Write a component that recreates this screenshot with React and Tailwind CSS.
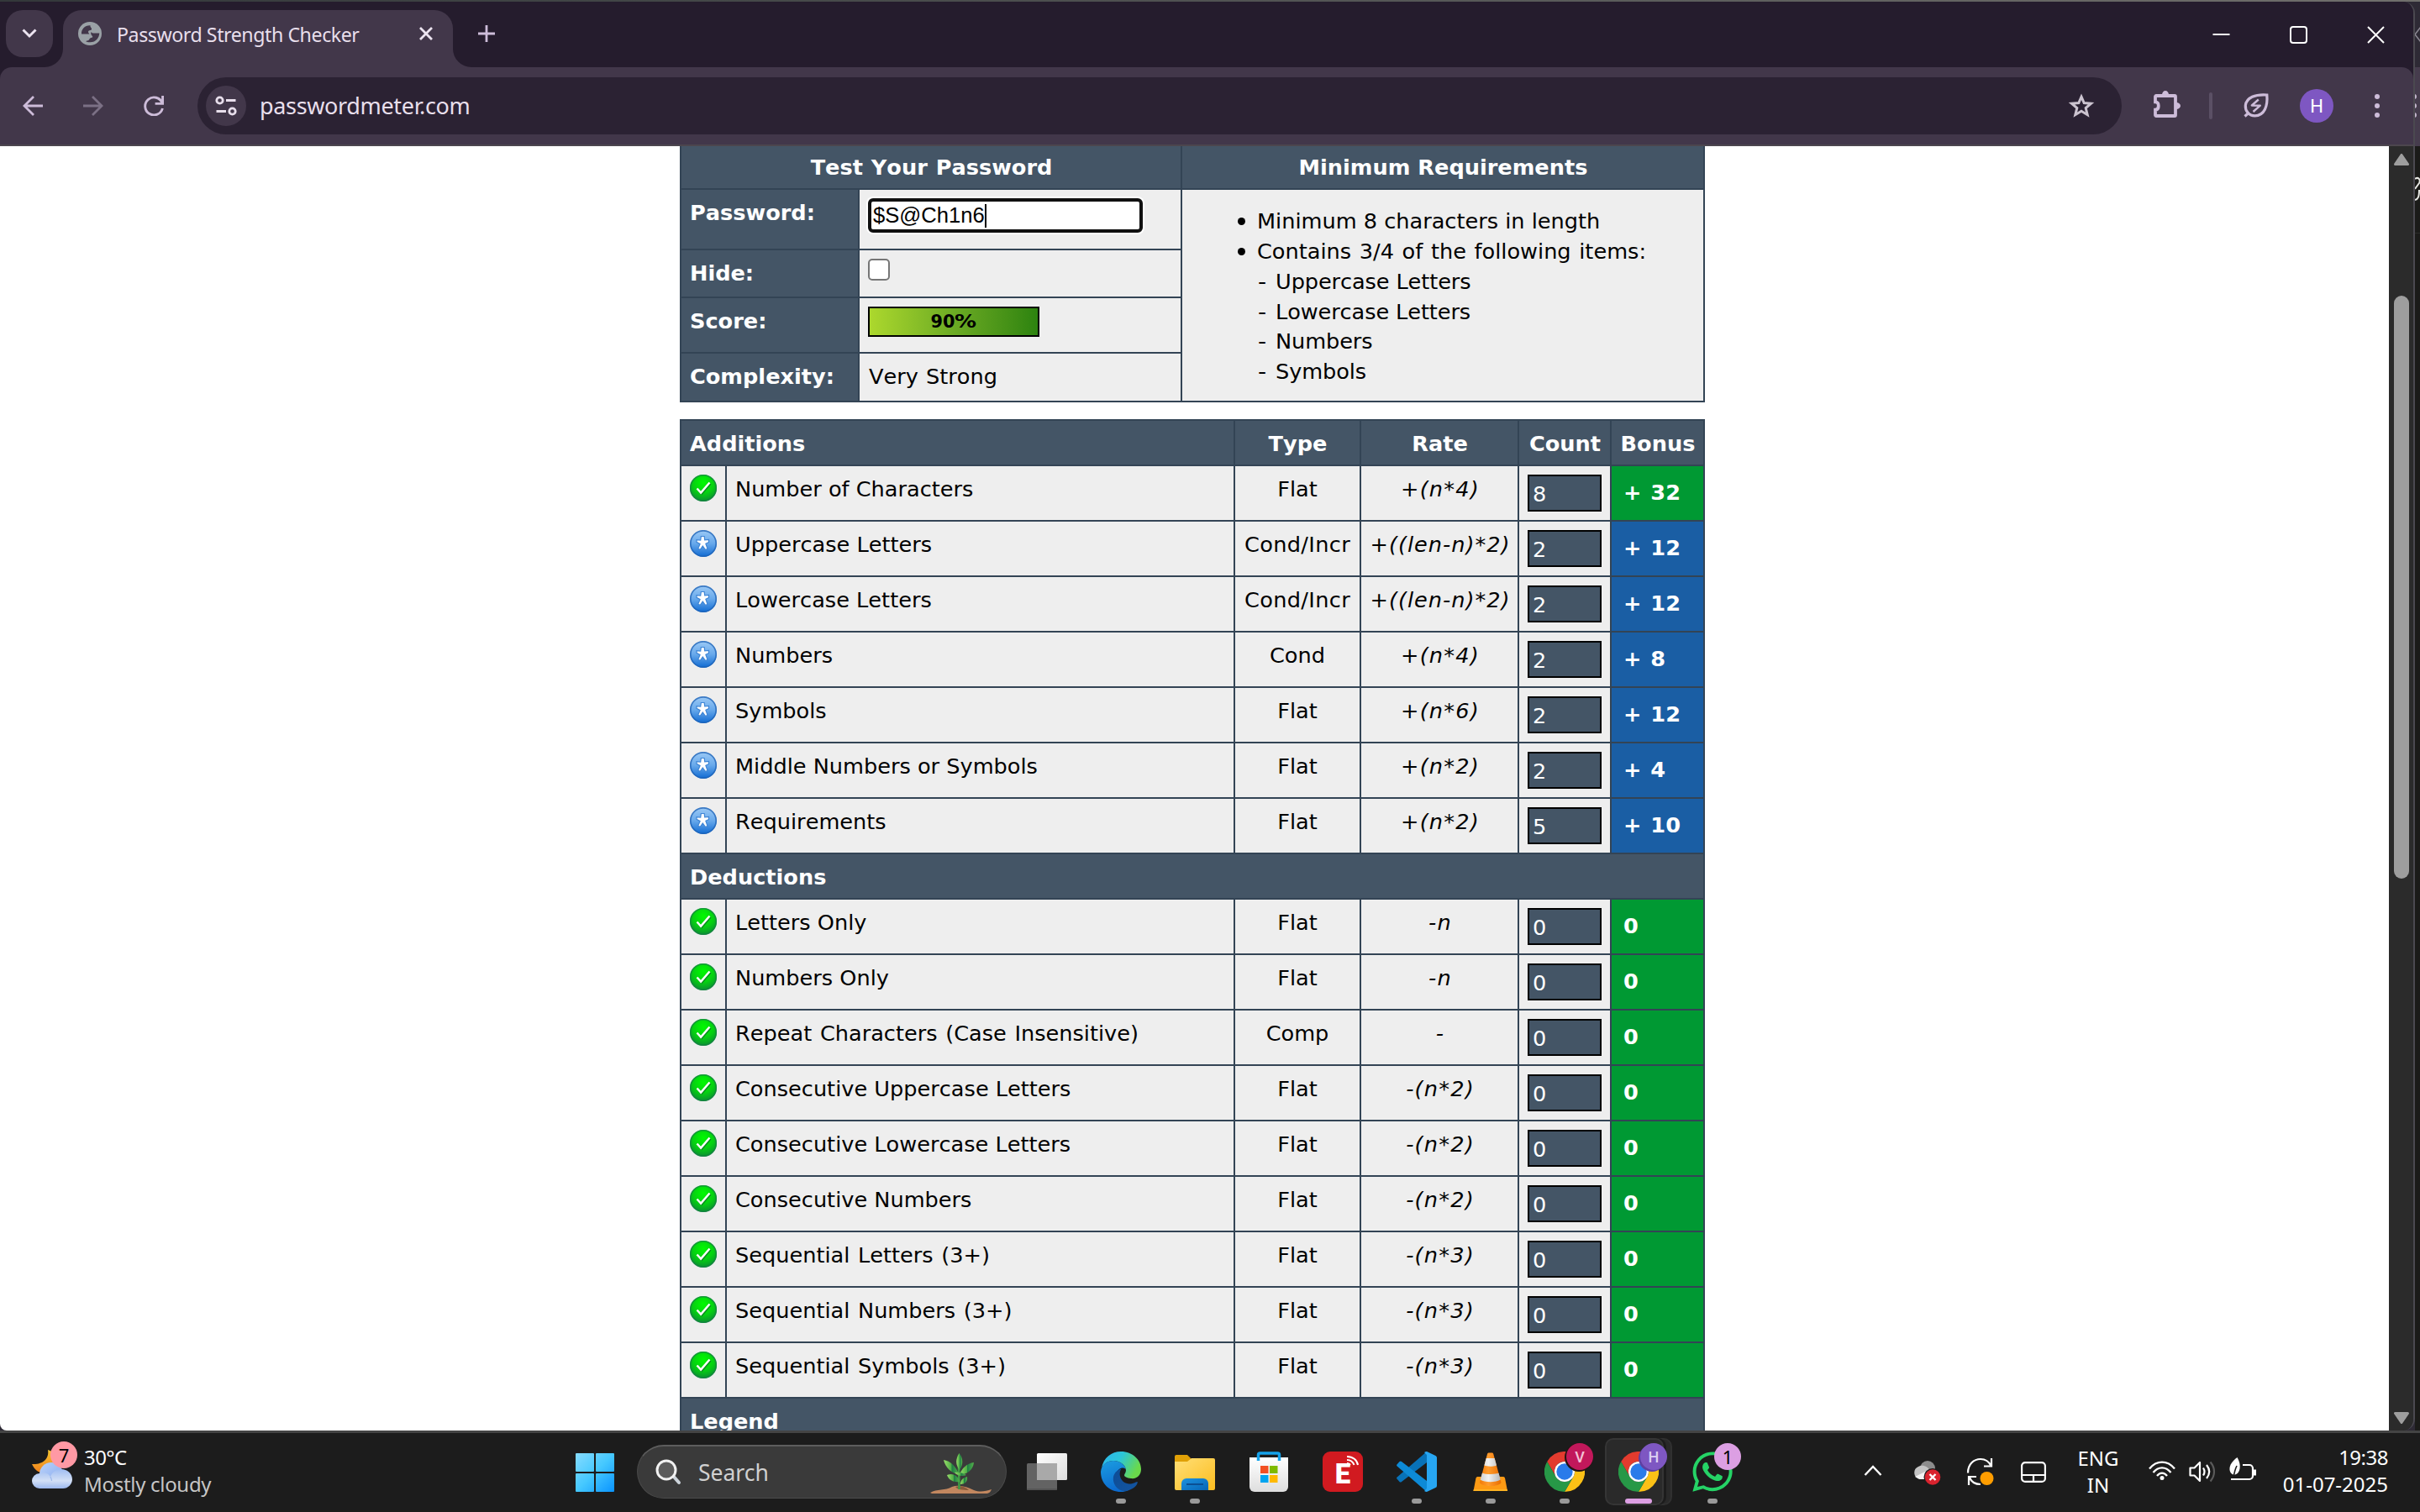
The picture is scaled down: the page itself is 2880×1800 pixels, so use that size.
import React from "react";
import { FaWhatsapp } from "react-icons/fa";

const UI = "font-['Noto_Sans','Open_Sans',sans-serif]";

/* ---------- browser chrome ---------- */

function Globe() {
  return (
    <svg viewBox="0 0 28 28" className="size-7">
      <circle cx="14" cy="14" r="14" fill="#9aa1a6" />
      <path fill="#42374a" d="M4 14.5C3.5 9 8 4 14.5 4.3C14 6.5 16.5 7 16 9C15.5 10.5 12 9.5 12 12C12 13.5 13.5 13.5 13.3 14.5z" />
      <path fill="#42374a" d="M15.5 12C17 14.5 20 13 25.3 13.5C25 19 21 24.5 14 24.3C9 24 8.5 23 10.5 22.5C15 22 11.5 19.5 17 18.5C18.5 17 14 16 15.5 12z" />
    </svg>
  );
}

function TabBar() {
  return (
    <div className="flex h-[78px] items-start bg-[#251c2d]">
      <div className="ml-[7px] mt-[10px] flex size-14 items-center justify-center rounded-[20px] bg-[#42374a]">
        <svg viewBox="0 0 18 12" className="h-3 w-[18px]" fill="none" stroke="#ece4f0" strokeWidth="3">
          <path d="M1.5 1.5L9 9l7.5-7.5" />
        </svg>
      </div>
      <div className="relative ml-3 mt-[10px] flex h-[68px] w-[464px] items-start rounded-t-[22px] bg-[#42374a] pl-[18px] pt-[14px]">
        <svg viewBox="0 0 22 22" className="absolute -left-[22px] bottom-0 size-[22px]">
          <path d="M22 0A22 22 0 0 1 0 22H22z" fill="#42374a" />
        </svg>
        <svg viewBox="0 0 22 22" className="absolute -right-[22px] bottom-0 size-[22px]">
          <path d="M0 0A22 22 0 0 0 22 22H0z" fill="#42374a" />
        </svg>
        <Globe />
        <span className="-mt-[1px] ml-[18px] w-[360px] whitespace-nowrap text-[23.2px] leading-[32px] tracking-[-0.45px] text-[#e8dfec]">
          Password Strength Checker
        </span>
        <svg viewBox="0 0 16 16" className="mt-[6px] size-4" fill="none" stroke="#ece4f0" strokeWidth="2.8">
          <path d="M1 1l14 14M15 1L1 15" />
        </svg>
      </div>
      <svg viewBox="0 0 20 20" className="ml-[30px] mt-[28px] size-5" fill="none" stroke="#cdbcd9" strokeWidth="2.8">
        <path d="M10 0v20M0 10h20" />
      </svg>
      <div className="ml-auto mr-[34px] mt-[29px] flex gap-[71px]">
        <svg viewBox="0 0 21 21" className="size-[21px]" stroke="#fff" strokeWidth="2"><path d="M.5 10h20" /></svg>
        <svg viewBox="0 0 21 21" className="size-[21px]" fill="none" stroke="#fff" strokeWidth="2">
          <rect x="1" y="1" width="19" height="19" rx="3" />
        </svg>
        <svg viewBox="0 0 21 21" className="size-[21px]" stroke="#fff" strokeWidth="2"><path d="M1 1l19 19M20 1L1 20" /></svg>
      </div>
    </div>
  );
}

function Toolbar() {
  return (
    <div className="bg-[#251c2d]">
      <div className="flex h-[94px] items-start rounded-t-[14px] border-b-2 border-[#4c464e] bg-[#42374a]">
        <svg viewBox="0 0 24 24" className="ml-[27px] mt-[34px] size-6" fill="none" stroke="#cdbcd9" strokeWidth="2.8">
          <path d="M24 12H2M13 1L2 12l11 11" />
        </svg>
        <svg viewBox="0 0 24 24" className="ml-[48px] mt-[34px] size-6" fill="none" stroke="#7b7085" strokeWidth="2.8">
          <path d="M0 12h22M11 1l11 11-11 11" />
        </svg>
        <svg viewBox="0 0 24 24" className="ml-[48px] mt-[34px] size-6" fill="none" stroke="#cdbcd9" strokeWidth="2.9">
          <path d="M22.6 0v9.4h-9M22 8.600A10.500 10.500 0 1 0 22.400 15" />
        </svg>
        <div className="ml-[40px] mt-3 flex h-[68px] w-[2290px] items-center rounded-full bg-[#2b2233]">
          <div className="ml-[10px] size-12 rounded-full bg-[#42374a]">
            <svg viewBox="0 0 48 48" className="size-12" fill="none" stroke="#e8dfec" strokeWidth="2.8">
              <circle cx="16.500" cy="17.500" r="3.700" />
              <circle cx="31.500" cy="30.500" r="3.700" />
              <path d="M24 17.500h11.500M12.500 30.500H24" />
            </svg>
          </div>
          <span className="ml-[16px] text-[27px] leading-[36px] tracking-[-0.35px] text-[#e8dfec]">passwordmeter.com</span>
          <svg viewBox="0 0 32 32" className="ml-auto mr-[32px] size-8" fill="none" stroke="#cbc3cf" strokeWidth="3">
            <path d="M16 5.200l3.200 7.400 8.300.6-6.300 5.300 2 8.200L16 22.300l-7.200 4.400 2-8.200-6.300-5.300 8.300-.6z" />
          </svg>
        </div>
        <svg viewBox="0 0 32 32" className="ml-[38px] mt-[28px] size-8" fill="none" stroke="#cdbcd9" strokeWidth="3.800">
          <path d="M3 6h22a1 1 0 0 1 1 1v22a1 1 0 0 1-1 1H3a1 1 0 0 1-1-1v-6.300c3 0 3.800-2 3.800-4.700S5 13.300 2 13.300V7a1 1 0 0 1 1-1z" />
          <path stroke="none" fill="#cdbcd9" d="M10 5a4 5 0 0 1 8 0zM27 14a5 4 0 0 1 0 8z" />
        </svg>
        <div className="ml-[34px] mt-[30px] h-8 w-1 rounded-full bg-[#5b5065]" />
        <svg viewBox="0 0 32 32" className="ml-[37px] mt-[30px] size-8" fill="none" stroke="#cdbcd9" strokeWidth="3.200">
          <path d="M27.800 3C14 2 3.500 6 2.300 15.500C1.800 22 6.500 27.800 13.500 27.800C25 27.500 29 16 27.800 3z" />
          <path d="M6.500 24l-5 4.500" />
          <path strokeWidth="2.400" strokeLinejoin="round" d="M17.800 8.500l-8 7 10 .2-8.300 7.300" />
        </svg>
        <div className="ml-[35px] mt-[26px] flex size-10 items-center justify-center rounded-full bg-[#7e57c2] font-['Roboto'] text-[22px] text-white">
          H
        </div>
        <div className="ml-[49px] mt-[32px] flex flex-col gap-[5px]">
          <i className="size-[6px] rounded-full bg-[#cdbcd9]" />
          <i className="size-[6px] rounded-full bg-[#cdbcd9]" />
          <i className="size-[6px] rounded-full bg-[#cdbcd9]" />
        </div>
      </div>
    </div>
  );
}

/* ---------- page ---------- */

function PassIcon() {
  return (
    <svg viewBox="0 0 32 32" className="size-8">
      <defs>
        <radialGradient id="passFill" cx="0.5" cy="0.3" r="0.72">
          <stop offset="0" stopColor="#00fa00" />
          <stop offset="0.55" stopColor="#06cf12" />
          <stop offset="1" stopColor="#0b8a35" />
        </radialGradient>
      </defs>
      <circle cx="16" cy="16" r="16" fill="url(#passFill)" />
      <circle cx="16" cy="16" r="15.300" fill="none" stroke="#157f45" strokeOpacity="0.7" strokeWidth="1.600" />
      <path d="M8.500 16.500l4.600 5L23.500 9.500" fill="none" stroke="#0a8a1e" strokeWidth="2.500" transform="translate(1 1.200)" />
      <path d="M8.500 16.500l4.600 5L23.500 9.500" fill="none" stroke="#fff" strokeWidth="2.500" />
    </svg>
  );
}

function StarIcon() {
  return (
    <svg viewBox="0 0 32 32" className="size-8">
      <defs>
        <linearGradient id="starFill" x1="0" y1="0" x2="0" y2="1">
          <stop offset="0" stopColor="#9ccaf6" />
          <stop offset="0.5" stopColor="#68a9eb" />
          <stop offset="1" stopColor="#0f6ad2" />
        </linearGradient>
      </defs>
      <circle cx="16" cy="16" r="16" fill="url(#starFill)" />
      <circle cx="16" cy="16" r="15.200" fill="none" stroke="#1f62b4" strokeOpacity="0.75" strokeWidth="1.700" />
      <path
        d="M13.300 7.500h3.900l.5 4.300 4.800-.3v3.100l-3.600 1.600 2.200 6.300-2.700.9-3.100-4.300-3 4.200-2.600-1.100 2.400-5.600-4.100-2.200v-2.700l4.700.3z"
        fill="#fff" stroke="#3f86d6" strokeWidth="1.200"
      />
    </svg>
  );
}

const additions = [
  ["pass", "Number of Characters", "Flat", "+(n*4)", "8", "+ 32"],
  ["star", "Uppercase Letters", "Cond/Incr", "+((len-n)*2)", "2", "+ 12"],
  ["star", "Lowercase Letters", "Cond/Incr", "+((len-n)*2)", "2", "+ 12"],
  ["star", "Numbers", "Cond", "+(n*4)", "2", "+ 8"],
  ["star", "Symbols", "Flat", "+(n*6)", "2", "+ 12"],
  ["star", "Middle Numbers or Symbols", "Flat", "+(n*2)", "2", "+ 4"],
  ["star", "Requirements", "Flat", "+(n*2)", "5", "+ 10"],
];

const deductions = [
  ["pass", "Letters Only", "Flat", "-n", "0", "0"],
  ["pass", "Numbers Only", "Flat", "-n", "0", "0"],
  ["pass", "Repeat Characters (Case Insensitive)", "Comp", "-", "0", "0"],
  ["pass", "Consecutive Uppercase Letters", "Flat", "-(n*2)", "0", "0"],
  ["pass", "Consecutive Lowercase Letters", "Flat", "-(n*2)", "0", "0"],
  ["pass", "Consecutive Numbers", "Flat", "-(n*2)", "0", "0"],
  ["pass", "Sequential Letters (3+)", "Flat", "-(n*3)", "0", "0"],
  ["pass", "Sequential Numbers (3+)", "Flat", "-(n*3)", "0", "0"],
  ["pass", "Sequential Symbols (3+)", "Flat", "-(n*3)", "0", "0"],
];

function Row({ data }) {
  const [status, name, type, rate, count, bonus] = data;
  return (
    <div className="grid h-16 grid-cols-[52px_603px_148px_186px_108px_109px] gap-x-[2px] leading-[32px]">
      <div className="bg-[#eee] p-[10px]">{status === "pass" ? <PassIcon /> : <StarIcon />}</div>
      <div className={"bg-[#eee] pl-[10px] pt-[11px]" + (name.includes("(") ? " [word-spacing:1.500px]" : "")}>{name}</div>
      <div className={"bg-[#eee] pt-[11px] text-center" + (type.includes("/") ? " tracking-[0.35px]" : "")}>{type}</div>
      <div className={"bg-[#eee] pl-[2px] pt-[11px] text-center italic " + (rate.includes("len") ? "tracking-[1px]" : "tracking-[1.2px]")}>{rate}</div>
      <div className="bg-[#eee] p-[10px]">
        <div className="h-11 border-2 border-black bg-[#456] pl-[4px] pt-[5px] text-white">{count}</div>
      </div>
      <div className={(status === "pass" ? "bg-[#093]" : "bg-[#1a5ea4]") + " pl-[14px] pt-[15px] font-bold text-white [word-spacing:2px]"}>
        {bonus}
      </div>
    </div>
  );
}

function SectionHeader({ title }) {
  return <div className="h-[52px] bg-[#456] pl-[10px] pt-[11px] font-bold leading-[32px] text-white">{title}</div>;
}

function Label({ children }) {
  return <div className="bg-[#456] pl-[10px] pt-[11px] font-bold leading-[32px] text-white">{children}</div>;
}

function Requirement({ children }) {
  return (
    <li className="flex items-center">
      <i className="ml-[66px] mr-[14px] size-[9px] rounded-full bg-black" />
      <span>{children}</span>
    </li>
  );
}

function SubRequirement({ children }) {
  return (
    <li className="flex pl-[89px] tracking-[-0.1px]">
      <span className="inline-block w-[21px] origin-left scale-x-110 pl-px">-</span>
      <span className="pl-px">{children}</span>
    </li>
  );
}

function TestPanel() {
  return (
    <div className="grid grid-cols-[210px_382px_620px] grid-rows-[50px_70px_55px_64px_56px] gap-[2px] bg-[#345] px-[2px] pb-[2px]">
      <div className="col-span-2 bg-[#456] pl-px pt-[9px] text-center font-bold leading-[32px] text-white [word-spacing:1px]">Test Your Password</div>
      <div className="bg-[#456] pl-px pt-[9px] text-center font-bold leading-[32px] text-white">Minimum Requirements</div>

      <Label>Password:</Label>
      <div className="bg-[#eee] pl-[10px] pt-[10px]">
        <div className="flex h-[41px] w-[327px] items-center rounded-[6px] border-4 border-[#101010] bg-white pl-[2px] font-['Liberation_Sans',Arial,sans-serif] shadow-[0_0_0_2px_#fff]">
          <span>$S@Ch1n6</span>
          <i className="h-[28px] w-[2px] bg-black" />
        </div>
      </div>
      <ul className="row-span-4 bg-[#eee] pt-[20px] leading-[35.84px]">
        <Requirement>Minimum 8 characters in length</Requirement>
        <Requirement><span className="[word-spacing:1.500px]">Contains 3/4 of the following items:</span></Requirement>
        <SubRequirement>Uppercase Letters</SubRequirement>
        <SubRequirement>Lowercase Letters</SubRequirement>
        <SubRequirement>Numbers</SubRequirement>
        <SubRequirement>Symbols</SubRequirement>
      </ul>

      <Label>Hide:</Label>
      <div className="bg-[#eee] pl-[10px] pt-[10px]">
        <div className="size-[26px] rounded-[5px] border-2 border-[#767676] bg-white" />
      </div>

      <Label>Score:</Label>
      <div className="bg-[#eee] pl-[10px] pt-[10px]">
        <div className="flex h-9 w-[204px] justify-center border-2 border-black bg-linear-to-r from-[#acd82d] via-[#6cab24] to-[#2c830f] text-[20.8px] font-bold leading-[33px]">
          <span>90</span>
          <span className="inline-block w-[26px] origin-left scale-x-125">%</span>
        </div>
      </div>

      <Label>Complexity:</Label>
      <div className="bg-[#eee] pl-[11px] pt-[11px] leading-[32px] [word-spacing:1px]">Very Strong</div>
    </div>
  );
}

function ScoreTable() {
  const head = "bg-[#456] pl-px pt-[11px] text-center";
  return (
    <div className="mt-5 flex flex-col gap-[2px] bg-[#345] p-[2px]">
      <div className="grid h-[52px] grid-cols-[657px_148px_186px_108px_109px] gap-x-[2px] font-bold leading-[32px] text-white">
        <div className="bg-[#456] pl-[10px] pt-[11px]">Additions</div>
        <div className={head}>Type</div>
        <div className={head}>Rate</div>
        <div className={head}>Count</div>
        <div className={head}>Bonus</div>
      </div>
      {additions.map((r) => <Row key={r[1]} data={r} />)}
      <SectionHeader title="Deductions" />
      {deductions.map((r) => <Row key={r[1]} data={r} />)}
      <SectionHeader title="Legend" />
    </div>
  );
}

function Scrollbar() {
  return (
    <div className="flex w-[29px] flex-col items-center bg-[#2b2b2b]">
      <svg viewBox="0 0 18 14" className="ml-px mt-[9px] h-[14px] w-[18px]">
        <path d="M9 1.500L16.500 12.500H1.500z" fill="#9e9e9e" stroke="#9e9e9e" strokeWidth="3" strokeLinejoin="round" />
      </svg>
      <div className="ml-px mt-[155px] h-[694px] w-[18px] rounded-full bg-[#9e9e9e]" />
      <svg viewBox="0 0 18 14" className="mb-[8px] ml-px mt-auto h-[14px] w-[18px]">
        <path d="M9 12.500L1.500 1.500h15z" fill="#9e9e9e" stroke="#9e9e9e" strokeWidth="3" strokeLinejoin="round" />
      </svg>
    </div>
  );
}

function Page() {
  return (
    <div className="flex h-[1529px]">
      <main className="flex-1 overflow-hidden bg-white font-['DejaVu_Sans',Verdana,sans-serif] text-[25.6px] text-black [font-kerning:none]">
        <div className="ml-[809px] w-[1220px]">
          <TestPanel />
          <ScoreTable />
        </div>
      </main>
      <Scrollbar />
    </div>
  );
}

/* Sliver of the window that sits behind, on the right edge */
function BackWindow() {
  return (
    <div className="flex w-[6px] flex-col overflow-hidden">
      <div className="h-[78px] bg-[#2e2a35] pt-[29px]">
        <svg viewBox="0 0 6 20" className="h-5 w-[6px]" fill="none" stroke="#8b8792" strokeWidth="1.500"><path d="M7 1L0 10l7 9" /></svg>
      </div>
      <div className="flex h-[94px] flex-col gap-[5px] bg-[#463c4d] pt-[32px]">
        <i className="-ml-[4px] size-[6px] rounded-full bg-[#c5b8ce]" />
        <i className="-ml-[4px] size-[6px] rounded-full bg-[#c5b8ce]" />
        <i className="-ml-[4px] size-[6px] rounded-full bg-[#c5b8ce]" />
      </div>
      <div className="h-[104px] border-b border-[#2c2c2a] bg-[#1b1b19] pt-[36px]">
        <svg viewBox="0 0 6 32" className="h-8 w-[6px]" fill="none" stroke="#e6e6e2" strokeWidth="2">
          <path d="M0 3c4-3 7 1 5 5l-5 7M5 16c0 8-1 11-5 12" />
        </svg>
      </div>
      <div className="flex-1 bg-[#1b1b19]" />
    </div>
  );
}

/* ---------- taskbar ---------- */

function Weather() {
  return (
    <div className="relative ml-[38px] mt-[20px] h-[48px] w-[50px]">
      <svg viewBox="0 0 50 48" className="h-12 w-[50px]">
        <defs>
          <linearGradient id="moon" x1="0" y1="0" x2="0" y2="1"><stop offset="0" stopColor="#f7c531" /><stop offset="1" stopColor="#ee7f1b" /></linearGradient>
          <linearGradient id="cloud" x1="0" y1="0" x2="0" y2="1"><stop offset="0" stopColor="#9fbdf2" /><stop offset="0.6" stopColor="#d3e0f6" /><stop offset="1" stopColor="#9cb8ee" /></linearGradient>
          <linearGradient id="cloudBack" x1="0" y1="0" x2="1" y2="1"><stop offset="0" stopColor="#b9d2fa" /><stop offset="1" stopColor="#86a8ee" /></linearGradient>
        </defs>
        <path d="M19 0C21 11 12 18 0 17C4 26 12 30 20 26L30 18L24 2z" fill="url(#moon)" />
        <circle cx="23" cy="29" r="14" fill="url(#cloudBack)" />
        <path d="M9 46a9 9 0 0 1 0-18c4-2 10-1 13 4c2-6 8-9 13-9c7 0 13 5 13 12c0 6-5 11-11 11z" fill="url(#cloud)" />
        <path d="M22 32c1 2 1.500 3 1.500 5" fill="none" stroke="#7fa2e6" strokeWidth="1.200" opacity="0.6" />
      </svg>
      <span className="absolute -top-[10px] left-[22px] flex size-8 items-center justify-center rounded-full bg-[#ff99a4] text-[22px] leading-none text-black">7</span>
    </div>
  );
}

function WindowsLogo() {
  return (
    <svg viewBox="0 0 46 46" className="size-[46px]">
      <defs>
        <linearGradient id="win" x1="0" y1="0" x2="46" y2="46" gradientUnits="userSpaceOnUse">
          <stop offset="0" stopColor="#86dcff" /><stop offset="0.5" stopColor="#45c8ff" /><stop offset="1" stopColor="#0a94ff" />
        </linearGradient>
      </defs>
      <g fill="url(#win)">
        <rect width="22" height="22" rx="1" /><rect x="24" width="22" height="22" rx="1" />
        <rect y="24" width="22" height="22" rx="1" /><rect x="24" y="24" width="22" height="22" rx="1" />
      </g>
    </svg>
  );
}

function Plant() {
  return (
    <svg viewBox="0 0 74 50" className="h-[50px] w-[74px]">
      <defs>
        <linearGradient id="leaf" x1="0" y1="0" x2="1" y2="0"><stop offset="0" stopColor="#9ae06c" /><stop offset="0.5" stopColor="#4fae45" /><stop offset="0.55" stopColor="#1f7f45" /><stop offset="1" stopColor="#55b04a" /></linearGradient>
      </defs>
      <path d="M0 47C8 42 18 45 26 40C34 37 44 40 52 44C60 47 66 45 73 43C72 46 70 48 66 48H2z" fill="#c2875f" />
      <path d="M30 40c6-2 12 0 16 4c-8 0-14-1-16-4z" fill="#8a5a3c" />
      <path d="M34.500 43C34.500 30 34 22 34 14" stroke="#3f9a45" strokeWidth="2.600" fill="none" />
      <g fill="url(#leaf)">
        <path d="M34.500 0C40 7 39 14 35 20C30 14 30 7 34.500 0z" />
        <path d="M16 8C24 9 31 16 34 25C25 24 18 17 16 8z" />
        <path d="M52 11C51 20 44 25 35 26C37 18 44 12 52 11z" />
        <path d="M20 26C28 23 34 28 35 34C28 35 22 32 20 26z" />
        <path d="M44 28C45 34 41 37 36 37C36 32 39 29 44 28z" />
        <path d="M29 23C35 22 40 24 43 26C38 28 32 27 29 23z" />
      </g>
    </svg>
  );
}

function SearchBox() {
  return (
    <div className="ml-[27px] mt-[14px] flex h-16 w-[440px] items-start rounded-full border border-t-2 border-[#4a4a4a] border-t-[#5d5d5d] bg-[#3a3a3a]">
      <svg viewBox="0 0 32 32" className="ml-[21px] mt-[15px] size-8" fill="none">
        <path d="M21 20l7 8" stroke="#ccd3da" strokeWidth="4" strokeLinecap="round" />
        <circle cx="13" cy="13" r="11" fill="#5c5c5c" stroke="#f1f1f1" strokeWidth="3" />
      </svg>
      <span className="ml-[19px] mt-[11px] text-[26.5px] leading-[40px] text-[#d0d0d0]">Search</span>
      <div className="ml-auto mr-[16px] mt-[8px]"><Plant /></div>
    </div>
  );
}

function TaskView() {
  return (
    <svg viewBox="0 0 48 44" className="h-11 w-12">
      <defs><linearGradient id="tv" x1="0" y1="0" x2="1" y2="1"><stop offset="0" stopColor="#fff" /><stop offset="1" stopColor="#dcdcdc" /></linearGradient></defs>
      <rect x="12" width="36" height="32" rx="1.500" fill="url(#tv)" />
      <rect y="12" width="36" height="32" rx="1.500" fill="#636363" />
      <rect x="12" y="12" width="24" height="20" fill="#a9a9a9" />
      <rect y="42" width="36" height="2" rx="1" fill="#555" />
    </svg>
  );
}

function Edge() {
  return (
    <svg viewBox="0 0 48 48" className="size-12">
      <defs>
        <linearGradient id="e1" x1="0" y1="0" x2="1" y2="0.400"><stop offset="0" stopColor="#2cb4ee" /><stop offset="0.5" stopColor="#2cc6d8" /><stop offset="1" stopColor="#6ad94b" /></linearGradient>
        <linearGradient id="e2" x1="0" y1="0" x2="0.300" y2="1"><stop offset="0" stopColor="#1b9de0" /><stop offset="1" stopColor="#0c6bcf" /></linearGradient>
        <linearGradient id="e3" x1="0" y1="0" x2="1" y2="1"><stop offset="0" stopColor="#0d4c96" /><stop offset="1" stopColor="#1455a0" /></linearGradient>
      </defs>
      <path fill="url(#e1)" d="M1 20C3 7 13 0 24 0C38 0 48 10 48 21C48 28 43 33 36 32C31 31.500 28 30 28 28C28.500 26.500 30 25 30 22C29 15 22 11 15 11C8 11 3 15 1 20Z" />
      <path fill="url(#e2)" d="M0 24C1 15 8 11 15 11C22 11 29 15 30 22C30 20 26 18 22 21C16 25 16 34 21 40C24 44 30 46 33 46C30 47.500 27 48 24 48C10 48 0 38 0 24Z" />
      <path fill="url(#e3)" d="M30 47C20 48 13.500 38 15 30C16.500 24 21 21.500 24.500 20.500C20 27 24 38 34 38.500C39 38.500 41 36.500 43.500 36C45 37 41 45 30 47Z" />
    </svg>
  );
}

function Explorer() {
  return (
    <svg viewBox="0 0 48 48" className="size-12">
      <defs>
        <linearGradient id="fo" x1="0" y1="0" x2="1" y2="1"><stop offset="0" stopColor="#ffdf76" /><stop offset="1" stopColor="#fcbd20" /></linearGradient>
        <linearGradient id="fb" x1="0" y1="0" x2="1" y2="1"><stop offset="0" stopColor="#1c92e0" /><stop offset="1" stopColor="#0765b5" /></linearGradient>
      </defs>
      <path d="M0 6a2 2 0 0 1 2-2h13l5 5v8H0z" fill="#e0a006" />
      <path d="M0 12h15l5-4h26a2 2 0 0 1 2 2v34a2 2 0 0 1-2 2H2a2 2 0 0 1-2-2z" fill="url(#fo)" />
      <path d="M8 46V38a6 6 0 0 1 6-6h20a6 6 0 0 1 6 6v8z" fill="url(#fb)" />
      <path d="M14 39h20" stroke="#0b4f93" strokeWidth="2" />
    </svg>
  );
}

function Store() {
  return (
    <svg viewBox="0 0 48 48" className="size-12">
      <defs><linearGradient id="st" x1="0" y1="0" x2="0" y2="1"><stop offset="0" stopColor="#fff" /><stop offset="1" stopColor="#dedede" /></linearGradient></defs>
      <path d="M1 7h46v35a6 6 0 0 1-6 6H7a6 6 0 0 1-6-6z" fill="url(#st)" />
      <path d="M11.500 11V4a2 2 0 0 1 2-2h21a2 2 0 0 1 2 2v7" fill="none" stroke="#16a2ea" strokeWidth="3.500" />
      <rect x="14" y="17" width="9.500" height="9" fill="#f25022" /><rect x="25" y="17" width="9.500" height="9" fill="#7fba00" />
      <rect x="14" y="28" width="9.500" height="9" fill="#00a4ef" /><rect x="25" y="28" width="9.500" height="9" fill="#ffb900" />
    </svg>
  );
}

function ExpressE() {
  return (
    <div className="relative flex size-12 items-center justify-center rounded-[9px] bg-[#d11a20] font-['Roboto'] text-[33px] font-black leading-none text-white">
      <span className="pt-[5px]">E</span>
      <svg viewBox="0 0 16 12" className="absolute right-[4px] top-[5px] h-3 w-4" fill="none" stroke="#fff" strokeWidth="2">
        <path d="M1 1c7 0 12 4 13 10M1 5c4 0 7 2 8.500 6M1 9c2 0 3 1 4 2" />
      </svg>
    </div>
  );
}

function VSCode() {
  return (
    <svg viewBox="0 0 48 48" className="size-12">
      <path d="M.7 30.500a1.500 1.500 0 0 0 0 2.300L3.500 36a2 2 0 0 0 2.500 0L36 13V0z" fill="#0872b8" />
      <path d="M.7 17.500a1.500 1.500 0 0 1 0-2.300L3.500 12a2 2 0 0 1 2.500 0L36 35v13z" fill="#0d8ad6" />
      <path d="M36 0l10.500 5a2.500 2.500 0 0 1 1.500 2.300v33.400a2.500 2.500 0 0 1-1.500 2.300L36 48c-1 0-2-.3-3-1l3-3V4l-3-3c1-.7 2-1 3-1z" fill="#27a6f2" />
    </svg>
  );
}

function Vlc() {
  return (
    <svg viewBox="0 0 48 48" className="size-12">
      <defs>
        <linearGradient id="vo" x1="0" y1="0" x2="1" y2="0"><stop offset="0" stopColor="#f37a05" /><stop offset="0.4" stopColor="#ff9c2e" /><stop offset="1" stopColor="#e86d00" /></linearGradient>
        <linearGradient id="vw" x1="0" y1="0" x2="1" y2="0"><stop offset="0" stopColor="#cfcfcf" /><stop offset="0.4" stopColor="#f2f2f2" /><stop offset="1" stopColor="#b8b8b8" /></linearGradient>
      </defs>
      <path d="M8.500 30h30.500a2 2 0 0 1 2 1.500l3 15.500H3.500l3-15.500a2 2 0 0 1 2-1.500z" fill="#fd9a14" />
      <path d="M3.800 45h40l.3 2H3.500z" fill="#ffb322" />
      <path d="M21.500 1.500h4.500a2 2 0 0 1 1.300 1.500L36.500 37c-3 5.500-22.500 5.500-25.500 0L20 3a2 2 0 0 1 1.500-1.500z" fill="url(#vo)" />
      <path d="M18.700 8h10l2.300 8.500c-3 1.500-11.500 1.500-14.600 0zM14 25.500c4 2 15.500 2 19.500 0l2.200 8c-5 3.500-19 3.500-24 0z" fill="url(#vw)" />
    </svg>
  );
}

function Chrome() {
  return (
    <svg viewBox="0 0 48 48" className="size-12">
      <path fill="#e33b2e" d="M3.200 12A24 24 0 0 1 44.800 12H24A12 12 0 0 0 13.600 30Z" />
      <path fill="#fbc116" d="M44.800 12A24 24 0 0 1 24 48L34.400 30A12 12 0 0 0 24 12Z" />
      <path fill="#279847" d="M24 48A24 24 0 0 1 3.200 12L13.600 30A12 12 0 0 0 34.400 30Z" />
      <circle cx="24" cy="24" r="12" fill="#fff" />
      <circle cx="24" cy="24" r="9.700" fill="#2a7bea" />
    </svg>
  );
}

function TaskbarApp({ children, dot, active }) {
  return (
    <div className="relative flex w-12 flex-col items-center pt-[22px]">
      {active && (
        <>
          <div className="absolute -right-[16px] top-[6px] h-20 w-[30px] rounded-[10px] border-2 border-[#303030] bg-[#292929]" />
          <div className="absolute -left-[16px] top-[6px] h-20 w-[73px] rounded-[10px] bg-[#1c1c1c]" />
          <div className="absolute -left-[16px] top-[6px] h-20 w-[70px] rounded-[10px] border-2 border-[#353535] bg-[#2a2a2a]" />
        </>
      )}
      <div className="relative size-12">{children}</div>
      {dot && <i className={"relative mt-2 h-[6px] rounded-full " + (active ? "w-8 bg-[#dc9fe3]" : "w-3 bg-[#9a9a9a]")} />}
    </div>
  );
}

function Badge({ className, children }) {
  return <span className={"absolute -top-[10px] left-[26px] flex size-8 items-center justify-center rounded-full " + className}>{children}</span>;
}

function Tray() {
  return (
    <>
      <svg viewBox="0 0 22 14" className="ml-auto mt-[38px] h-[14px] w-[22px]" fill="none" stroke="#fff" strokeWidth="2.400"><path d="M1.500 12L11 2l9.500 10" /></svg>
      <svg viewBox="0 0 34 30" className="ml-[37px] mt-[33px] h-[30px] w-[34px]">
        <circle cx="17" cy="9" r="9" fill="#8c8c8c" />
        <path d="M7 22a8 8 0 0 1-1-15c5-3 12 0 14 5v10z" fill="#c4c4c4" />
        <path d="M2 19l12-6 8 9H8z" fill="#f3f3f3" />
        <circle cx="23" cy="19.500" r="10.500" fill="#1c1c1c" />
        <circle cx="23" cy="19.500" r="9.300" fill="#d9232e" />
        <path d="M19.500 16l7 7M26.500 16l-7 7" stroke="#fff" strokeWidth="2.400" />
      </svg>
      <svg viewBox="0 0 34 34" className="ml-[29px] mt-[29px] size-[34px]" fill="none" stroke="#fff" strokeWidth="2.200">
        <path d="M2 18.500C2 8 9 2 17 2c6 0 10 3 12.500 8M30 1v9.500h-9" />
        <path d="M17 32C11 32 6 29 4 24M3 33V23h9" />
        <circle cx="24.500" cy="25" r="8" fill="#ff9d00" stroke="none" />
      </svg>
      <svg viewBox="0 0 30 25" className="ml-[31px] mt-[34px] h-[25px] w-[30px]" fill="none" stroke="#fff" strokeWidth="2.200">
        <rect x="1.100" y="1.100" width="27.800" height="22.800" rx="4" /><path d="M1 16h28M15 16v8" />
      </svg>
      <div className="ml-[37px] mt-[14px] w-[50px] text-center text-[24px] leading-[32px] text-white"><p>ENG</p><p>IN</p></div>
      <svg viewBox="0 0 32 24" className="ml-[35px] mt-[33px] h-6 w-8" fill="none" stroke="#fff" strokeWidth="2.300">
        <path d="M1 9.500c8.500-10.500 21.500-10.500 30 0M5.500 14c6-7.500 15-7.500 21 0M10 18c3.500-4.500 8.500-4.500 12 0" /><circle cx="16" cy="20.500" r="2.500" fill="#fff" stroke="none" />
      </svg>
      <svg viewBox="0 0 33 28" className="ml-[16px] mt-[32px] h-7 w-[33px]" fill="none" stroke="#fff" strokeWidth="2.200" strokeLinejoin="round">
        <path d="M1.500 9.500h5L13 3v22l-6.500-6.500h-5z" /><path d="M17 9.500c2 3 2 6 0 9M21 6c4 5 4 11 0 16" /><path d="M25.500 2.500c6 7 6 16 0 23" stroke="#5a5a5a" />
      </svg>
      <svg viewBox="0 0 33 28" className="ml-[15px] mt-[29px] h-7 w-[33px]" fill="none" stroke="#fff" strokeWidth="2.200">
        <path d="M16 9h8a4 4 0 0 1 4 4v9a4 4 0 0 1-4 4H2" /><path d="M30 14.500v7" strokeWidth="4" />
        <path d="M9.500 0C4 4 0 9 .5 14.500C1 19 4 21 7 20.500C13 19 15 9 9.500 0z" fill="#fff" stroke="none" /><path d="M5 24c1-6 2-10 4-14" stroke="#1c1c1c" strokeWidth="1.600" />
      </svg>
      <div className="ml-[24px] mr-[38px] mt-[13px] w-[132px] text-right text-[24px] leading-[32px] text-white">
        <p className="tracking-[-0.5px]">19:38</p><p>01-07-2025</p>
      </div>
    </>
  );
}

function Taskbar() {
  return (
    <div className={"flex h-[97px] items-start border-t-[3px] border-[#444] bg-[#1c1c1c] " + UI}>
      <Weather />
      <div className="ml-[12px] mt-[13px] w-[160px] whitespace-nowrap text-[24px] leading-[32px]">
        <p className="tracking-[-0.6px] text-white">30°C</p>
        <p className="tracking-[-0.3px] text-[#c6c6c6]">Mostly cloudy</p>
      </div>
      <div className="ml-[425px] mt-[24px]"><WindowsLogo /></div>
      <SearchBox />
      <div className="ml-[24px] mt-[24px]"><TaskView /></div>
      <div className="ml-[40px] flex h-[94px] gap-10">
        <TaskbarApp dot><Edge /></TaskbarApp>
        <TaskbarApp dot><Explorer /></TaskbarApp>
        <TaskbarApp><Store /></TaskbarApp>
        <TaskbarApp><ExpressE /></TaskbarApp>
        <TaskbarApp dot><VSCode /></TaskbarApp>
        <TaskbarApp dot><Vlc /></TaskbarApp>
        <TaskbarApp dot>
          <Chrome />
          <Badge className="bg-[#c2185b] font-['Roboto'] text-[18px] font-medium text-[#f3c4d6] shadow-[-1px_1px_0_1px_#241512]">V</Badge>
        </TaskbarApp>
        <TaskbarApp dot active>
          <Chrome />
          <Badge className="bg-[#7e57c2] font-['Roboto'] text-[18px] font-medium text-[#ddd0f2] shadow-[-2px_2px_0_0_#5f40a3]">H</Badge>
        </TaskbarApp>
        <TaskbarApp dot>
          <FaWhatsapp className="-ml-[3px] -mt-[3px] size-[54px] text-[#25d366]" />
          <Badge className="bg-[#dc9fe3] text-[22px] text-black">1</Badge>
        </TaskbarApp>
      </div>
      <Tray />
    </div>
  );
}

export default function App() {
  return (
    <div className={"flex h-[1800px] w-[2880px] flex-col overflow-hidden bg-[#1c1c1c] " + UI}>
      <div className="h-[2px] bg-linear-to-r from-[#33383a] to-[#706f6c]" />
      <div className="flex h-[1701px] bg-[#2e2a35]">
        <div className="flex w-[2874px] flex-col overflow-hidden rounded-tr-[14px] rounded-bl-[8px] rounded-br-[14px] border-r-2 border-[#4b4950]">
          <TabBar />
          <Toolbar />
          <Page />
        </div>
        <BackWindow />
      </div>
      <Taskbar />
    </div>
  );
}
